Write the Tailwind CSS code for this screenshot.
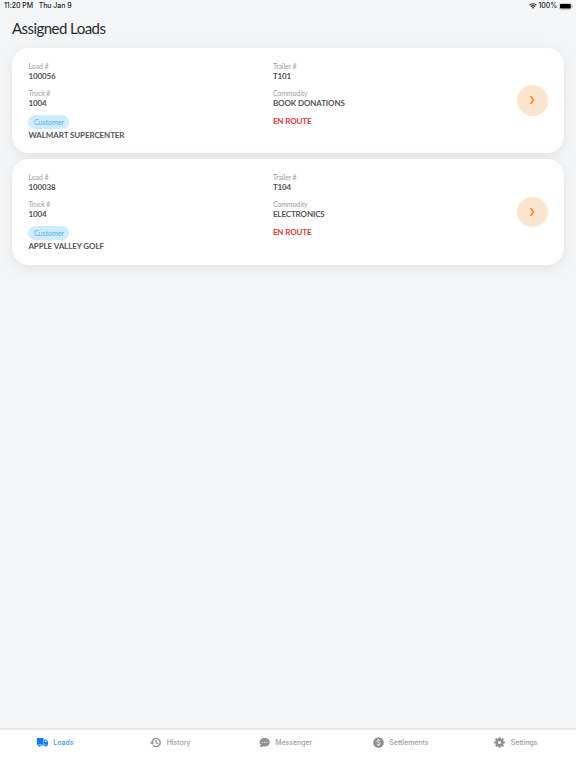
<!DOCTYPE html>
<html lang="en">
<head>
  <meta charset="UTF-8">
  <meta name="viewport" content="width=device-width, initial-scale=1.0">
  <title>Assigned Loads</title>
  <script src="https://cdn.jsdelivr.net/npm/@tailwindcss/browser@4"></script>
</head>
<body>

<div class="flex flex-col w-full h-screen overflow-hidden bg-[#f5f6f8] font-['Lato',sans-serif]">
  <!-- Status bar -->
  <div class="flex items-center justify-between h-3 pl-1 pr-[3px] shrink-0 font-['Inter',sans-serif] text-[7px] leading-3 font-medium text-[#222]">
    <div class="flex gap-[5.5px] tracking-[-0.05px]">
      <span>11:20 PM</span>
      <span>Thu Jan 9</span>
    </div>
    <div class="flex items-center gap-[2px]">
      <svg class="w-2 h-[6px]" viewBox="0 0 16 12" fill="none" stroke="currentColor" stroke-width="2.2">
        <path d="M1 4.4a10 10 0 0 1 14 0"></path>
        <path d="M3.7 7.3a6.2 6.2 0 0 1 8.6 0"></path>
        <path d="M8 11.6 5.6 9.2a3.4 3.4 0 0 1 4.8 0Z" fill="currentColor" stroke="none"></path>
      </svg>
      <span class="tracking-[-0.1px]">100%</span>
      <svg class="w-[14px] h-[7px]" viewBox="0 0 28 14">
        <rect x="0.5" y="0.5" width="24.5" height="12" rx="3" fill="none" stroke="#999"></rect>
        <rect x="2" y="2" width="21.5" height="9" rx="1.5" fill="#000"></rect>
        <path d="M26 4.500v4c1.200-.4 1.600-1.200 1.600-2s-.4-1.600-1.600-2Z" fill="#999"></path>
      </svg>
    </div>
  </div>

  <h1 class="pl-3 mt-[6px] h-[30px] shrink-0 text-[15px] leading-5 tracking-[-0.55px] text-[#2a2a2a]">Assigned Loads</h1>

  <main class="flex flex-col grow gap-[6px] px-3">
    <section class="flex h-[105px] rounded-[17px] bg-white pt-[13px] pl-[16.4px] pr-[16.5px] shadow-[0_3px_16px_rgba(0,0,0,0.08)]">
      <div class="w-[244.5px] text-[8px] leading-[10px] tracking-[-0.1px] font-bold text-[#555]">
        <div class="text-[7px] font-normal text-[#a0a0a0]">Load #</div>
        <div>100056</div>
        <div class="mt-[7px] text-[7px] font-normal text-[#a0a0a0]">Truck #</div>
        <div>1004</div>
        <div class="mt-[7px] w-[41px] h-[14px] rounded-full bg-[#d0ebfc] text-center text-[7px] leading-[14px] tracking-normal font-normal text-[#4ab2f2]">Customer</div>
        <div class="mt-px">WALMART SUPERCENTER</div>
      </div>
      <div class="grow text-[8px] leading-[10px] tracking-[-0.12px] font-bold text-[#555]">
        <div class="text-[7px] font-normal text-[#a0a0a0]">Trailer #</div>
        <div>T101</div>
        <div class="mt-[7px] text-[7px] font-normal text-[#a0a0a0]">Commodity</div>
        <div>BOOK DONATIONS</div>
        <div class="mt-2 text-[#e0353a]">EN ROUTE</div>
      </div>
      <div class="flex items-center justify-center w-[30.5px] h-[30.5px] mt-6 rounded-full bg-[#fce4ce]">
        <svg class="w-[6px] h-[10px]" viewBox="0 0 6 10" fill="none" stroke="#f5820b" stroke-width="1.4"><path d="m1.500 1 3 4-3 4"></path></svg>
      </div>
    </section>

    <section class="flex h-[106px] rounded-[17px] bg-white pt-[12.5px] pl-[16.4px] pr-[16.5px] shadow-[0_3px_16px_rgba(0,0,0,0.08)]">
      <div class="w-[244.5px] text-[8px] leading-[10px] tracking-[-0.1px] font-bold text-[#555]">
        <div class="text-[7px] font-normal text-[#a0a0a0]">Load #</div>
        <div>100038</div>
        <div class="mt-[7px] text-[7px] font-normal text-[#a0a0a0]">Truck #</div>
        <div>1004</div>
        <div class="mt-[7px] w-[41px] h-[14px] rounded-full bg-[#d0ebfc] text-center text-[7px] leading-[14px] tracking-normal font-normal text-[#4ab2f2]">Customer</div>
        <div class="mt-px">APPLE VALLEY GOLF</div>
      </div>
      <div class="grow text-[8px] leading-[10px] tracking-[-0.12px] font-bold text-[#555]">
        <div class="text-[7px] font-normal text-[#a0a0a0]">Trailer #</div>
        <div>T104</div>
        <div class="mt-[7px] text-[7px] font-normal text-[#a0a0a0]">Commodity</div>
        <div>ELECTRONICS</div>
        <div class="mt-[8.5px] text-[#e0353a]">EN ROUTE</div>
      </div>
      <div class="flex items-center justify-center w-[30.5px] h-[30.5px] mt-[25px] rounded-full bg-[#fce4ce]">
        <svg class="w-[6px] h-[10px]" viewBox="0 0 6 10" fill="none" stroke="#f5820b" stroke-width="1.4"><path d="m1.500 1 3 4-3 4"></path></svg>
      </div>
    </section>
  </main>

  <!-- Tab bar -->
  <nav class="grid grid-cols-5 h-10 shrink-0 border-t-2 border-[#e6e8ea] bg-white font-['Inter',sans-serif] text-[7px] leading-[10px] font-medium tracking-[-0.05px] text-[#8e8e93]">
    <a class="flex items-center justify-center gap-[5.5px] h-[25px] pr-[5px] text-[#0a7aff]" href="#">
      <svg class="w-[11px] h-[9px]" viewBox="0 0 22 18" fill="currentColor">
        <path d="M0 0h13v13H0Z"></path>
        <path fill-rule="evenodd" d="M14 3h4.500L22 7.500V15h-8Zm1.500 1.600v3.200h4.300l-2.300-3.200Z"></path>
        <path d="M0 13h22v2H0Z"></path>
        <circle cx="5" cy="15" r="2.600" stroke="#fff" stroke-width=".8"></circle>
        <circle cx="17.500" cy="15" r="2.600" stroke="#fff" stroke-width=".8"></circle>
      </svg>
      <span class="opacity-80">Loads</span>
    </a>
    <a class="flex items-center justify-center gap-[5.5px] h-[25px] pr-[5px]" href="#">
      <svg class="w-[11px] h-[11px]" viewBox="0 0 24 24" fill="currentColor" stroke="currentColor" stroke-width=".8">
        <path d="M13.500 2A10 10 0 0 0 3.500 12H.5l4.200 4.300L9 12H5.800a7.700 7.700 0 1 1 2.300 5.500l-1.600 1.700A10 10 0 1 0 13.500 2Zm-1.200 5v6l5 3 1-1.600-4.100-2.400V7Z"></path>
      </svg>
      <span class="opacity-85">History</span>
    </a>
    <a class="flex items-center justify-center gap-[5.5px] h-[25px] pr-[5px]" href="#">
      <svg class="w-[11px] h-[11px]" viewBox="0 0 24 24" fill="currentColor">
        <path d="M12.500 2C6.200 2 1.500 6 1.500 11.200c0 2.300.9 4.300 2.300 5.900C3.600 19 2.700 20.700 1.300 22c2.400 0 5.100-.8 6.800-2 1.400.5 2.900.7 4.400.7 6.200 0 11-4.200 11-9.500S18.700 2 12.500 2Z"></path>
        <g fill="#fff"><circle cx="7.500" cy="11.500" r="1.400"></circle><circle cx="12.500" cy="11.500" r="1.400"></circle><circle cx="17.500" cy="11.500" r="1.400"></circle></g>
      </svg>
      <span class="opacity-85">Messenger</span>
    </a>
    <a class="flex items-center justify-center gap-[5.5px] h-[25px] pr-[5px]" href="#">
      <svg class="w-[11px] h-[11px]" viewBox="0 0 24 24" fill="none">
        <circle cx="12" cy="12" r="11.500" fill="currentColor"></circle>
        <path d="M15 9c-.4-1.300-1.500-2-3-2-1.800 0-3 .9-3 2.400 0 3.500 6.200 1.600 6.200 5.200 0 1.500-1.300 2.400-3.200 2.400-1.700 0-2.900-.8-3.300-2.200M12 4.500V7m0 10v2.500" stroke="#fff" stroke-width="2"></path>
      </svg>
      <span class="opacity-85">Settlements</span>
    </a>
    <a class="flex items-center justify-center gap-[5.5px] h-[25px] pr-[5px]" href="#">
      <svg class="w-[11px] h-[11px]" viewBox="0 0 24 24" fill="none" stroke="currentColor">
        <circle cx="12" cy="12" r="6" stroke-width="5.500"></circle>
        <path d="M12 .3v4.500M12 19.200v4.500M.3 12h4.500M19.200 12h4.500M3.700 3.700 7 7M17 17l3.300 3.300M3.700 20.300 7 17M17 7l3.300-3.300" stroke-width="4.600"></path>
      </svg>
      <span class="opacity-85">Settings</span>
    </a>
  </nav>
</div>

</body>
</html>
